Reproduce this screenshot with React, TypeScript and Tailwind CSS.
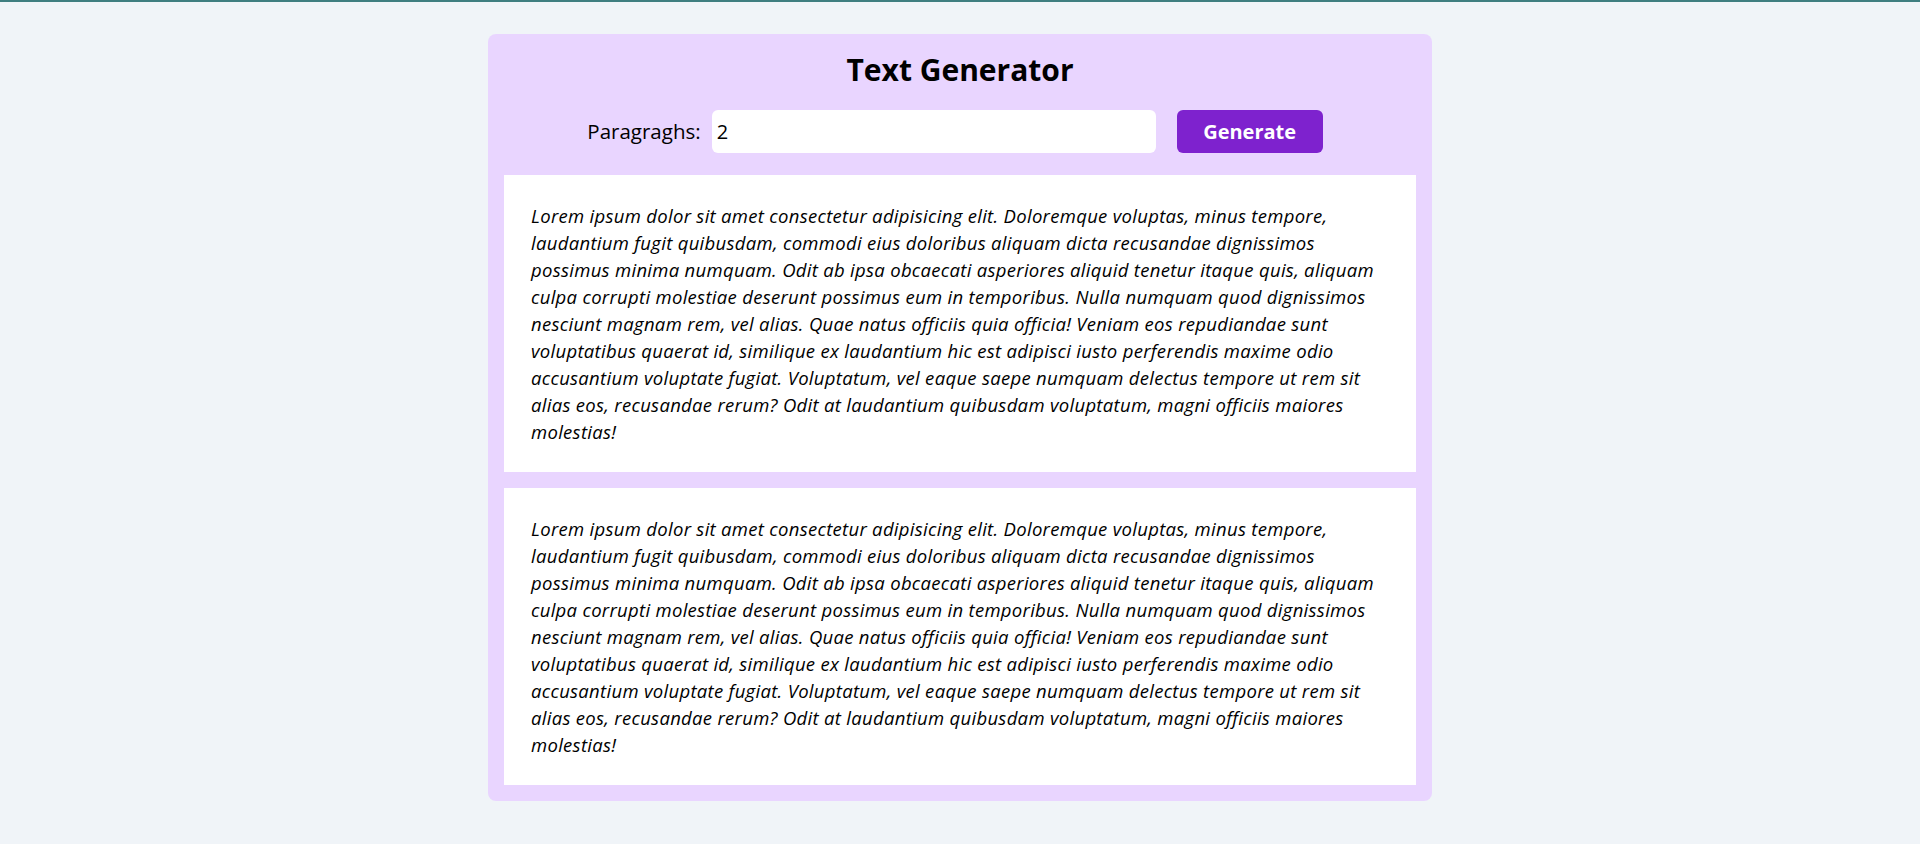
import React from "react";

const LINES = [
  "Lorem ipsum dolor sit amet consectetur adipisicing elit. Doloremque voluptas, minus tempore,",
  "laudantium fugit quibusdam, commodi eius doloribus aliquam dicta recusandae dignissimos",
  "possimus minima numquam. Odit ab ipsa obcaecati asperiores aliquid tenetur itaque quis, aliquam",
  "culpa corrupti molestiae deserunt possimus eum in temporibus. Nulla numquam quod dignissimos",
  "nesciunt magnam rem, vel alias. Quae natus officiis quia officia! Veniam eos repudiandae sunt",
  "voluptatibus quaerat id, similique ex laudantium hic est adipisci iusto perferendis maxime odio",
  "accusantium voluptate fugiat. Voluptatum, vel eaque saepe numquam delectus tempore ut rem sit",
  "alias eos, recusandae rerum? Odit at laudantium quibusdam voluptatum, magni officiis maiores",
  "molestias!",
];

function Paragraph() {
  return (
    <div className="bg-white p-[27px]">
      <p className="whitespace-nowrap text-[18.5px] leading-[27px] italic font-medium text-black tracking-[0.3px]">
        {LINES.map((l, i) => (
          <React.Fragment key={i}>
            {l}
            {i < LINES.length - 1 && <br />}
          </React.Fragment>
        ))}
      </p>
    </div>
  );
}

export default function App() {
  return (
    <div
      className="min-h-[844px] bg-[#f0f4f8] border-t-2 border-[#3f7e80]"
      style={{ fontFamily: '"Open Sans", "Noto Sans", sans-serif' }}
    >
      <div className="pt-[32px] flex justify-center">
        <div className="w-[944px] bg-[#e9d5ff] rounded-lg p-4 flex flex-col">
          <h1 className="text-center text-[30px] leading-[40px] font-bold text-black">
            Text Generator
          </h1>
          <div className="flex items-center justify-center mt-[20px] pr-[10px]">
            <label className="text-[20.5px] text-black mr-[11px]">Paragraghs:</label>
            <input
              type="number"
              defaultValue={2}
              className="w-[444px] h-[43px] bg-white rounded-md px-[5px] text-[20px] text-black outline-none"
            />
            <button className="ml-[21px] w-[146px] h-[43px] rounded-md bg-[#7e22ce] text-white text-[20px] font-bold">
              Generate
            </button>
          </div>
          <div className="mt-[22px] flex flex-col gap-4">
            <Paragraph />
            <Paragraph />
          </div>
        </div>
      </div>
    </div>
  );
}
